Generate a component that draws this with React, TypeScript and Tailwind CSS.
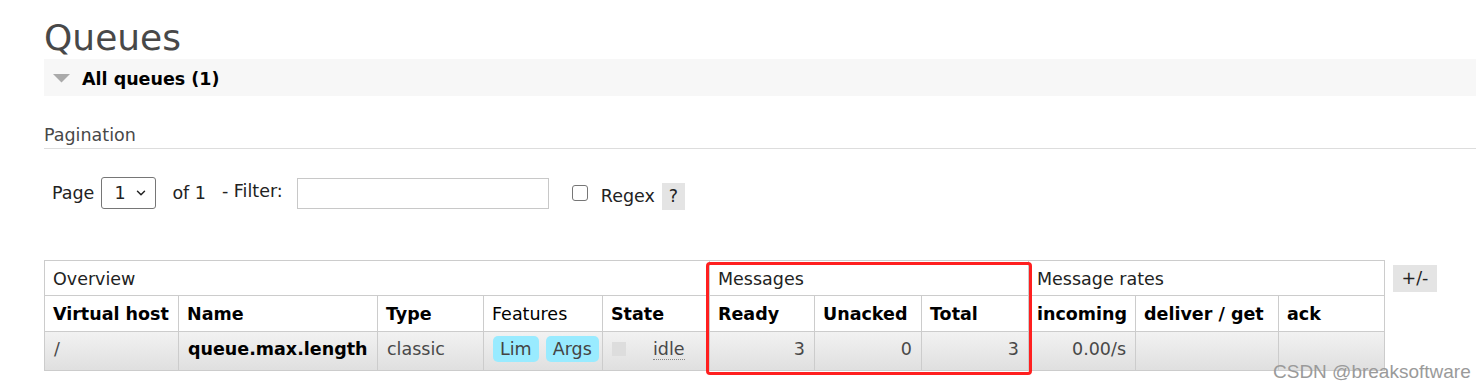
import { ChevronDown } from 'lucide-react'

const groupCols = [
  { label: 'Overview', span: 5 },
  { label: 'Messages', span: 3 },
  { label: 'Message rates', span: 3 },
]

const headers = [
  { label: 'Virtual host', w: 'w-[134px]' },
  { label: 'Name', w: 'w-[199px]' },
  { label: 'Type', w: 'w-[106px]' },
  { label: 'Features', w: 'w-[119px]', normal: true },
  { label: 'State', w: 'w-[107px]' },
  { label: 'Ready', w: 'w-[105px]' },
  { label: 'Unacked', w: 'w-[107px]' },
  { label: 'Total', w: 'w-[107px]' },
  { label: 'incoming', w: 'w-[107px]' },
  { label: 'deliver / get', w: 'w-[143px]' },
  { label: 'ack', w: 'w-[106px]' },
]

function Badge({ children }: { children: string }) {
  return (
    <span className="inline-block rounded-[5px] bg-[#99ebff] px-[7px] leading-[26px] text-[#444]">{children}</span>
  )
}

export default function App() {
  const cell = 'border border-[#cccccc] px-[9px] whitespace-nowrap overflow-hidden'
  const dcell = `${cell} pb-[4px]`

  return (
    <div className="min-h-[385px] w-[1476px] overflow-hidden bg-white pl-[44px] font-['DejaVu_Sans',Verdana,sans-serif] text-[17.5px] text-[#222]">
      {/* Title */}
      <h1 className="mt-[17px] text-[36px] leading-[42px] text-[#484848]">Queues</h1>

      {/* Section header */}
      <div className="flex h-[37px] items-center bg-[#f7f7f7]">
        <svg width="17" height="9" viewBox="0 0 17 9" className="ml-[9px] mt-[1px]">
          <polygon points="0,0 17,0 8.5,8.5" fill="#aaaaaa" />
        </svg>
        <span className="ml-[12px] mt-[3px] text-[17.5px] font-bold text-black">All queues (1)</span>
      </div>

      {/* Pagination */}
      <div className="mt-[29px] border-b border-[#dddddd] pb-[3px] leading-[20px] text-[#484848]">Pagination</div>

      <div className="mt-[28px] flex h-[32px] items-center pl-[8px] text-[17.5px] text-[#222]">
        <span>Page</span>
        <div className="ml-[7px] flex h-[32px] w-[55px] items-center justify-between rounded-[3px] border border-[#767676] pl-[12px] pr-[7px]">
          <span>1</span>
          <ChevronDown className="h-[14px] w-[14px] text-[#222]" strokeWidth={2.5} />
        </div>
        <span className="ml-[16px]">of 1</span>
        <span className="-mt-[4px] ml-[16px]">- Filter:</span>
        <div className="ml-[14px] h-[31px] w-[252px] border border-[#c8c8c8]" />
        <div className="ml-[23px] h-[16px] w-[16px] rounded-[3px] border border-[#767676]" />
        <span className="ml-[13px] mt-[6px]">Regex</span>
        <span className="ml-[7px] mt-[6px] flex h-[27px] w-[23px] items-center justify-center bg-[#e4e4e4]">?</span>
      </div>

      {/* Table */}
      <div className="relative mt-[51px] flex items-start gap-[8px]">
        <table className="w-[1341px] table-fixed border-collapse text-[17.5px]">
          <colgroup>
            {headers.map((h) => (
              <col key={h.label} className={h.w} />
            ))}
          </colgroup>
          <thead>
            <tr className="h-[35px]">
              {groupCols.map((g) => (
                <th key={g.label} colSpan={g.span} className={`${cell} pl-[8px] pt-[2px] text-left font-normal`}>
                  {g.label}
                </th>
              ))}
            </tr>
            <tr className="h-[36px]">
              {headers.map((h) => (
                <th key={h.label} className={`${cell} pl-[8px] pt-[2px] text-left ${h.normal ? 'font-normal' : 'font-bold'} text-black`}>
                  {h.label}
                </th>
              ))}
            </tr>
          </thead>
          <tbody>
            <tr className="h-[39px] bg-gradient-to-b from-[#f2f2f2] to-[#dfdfdf] text-[#484848]">
              <td className={dcell}>/</td>
              <td className={`${dcell} font-bold text-black`}>queue.max.length</td>
              <td className={dcell}>classic</td>
              <td className={dcell}>
                <div className="flex gap-[7px]">
                  <Badge>Lim</Badge>
                  <Badge>Args</Badge>
                </div>
              </td>
              <td className={dcell}>
                <div className="flex items-center">
                  <span className="h-[14px] w-[14px] bg-[#dddddd]" />
                  <span className="ml-[27px] border-b border-dotted border-[#888] leading-[20px]">idle</span>
                </div>
              </td>
              <td className={`${dcell} text-right`}>3</td>
              <td className={`${dcell} text-right`}>0</td>
              <td className={`${dcell} text-right`}>3</td>
              <td className={`${dcell} text-right`}>0.00/s</td>
              <td className={dcell} />
              <td className={dcell} />
            </tr>
          </tbody>
        </table>
        <span className="mt-[5px] flex h-[27px] w-[44px] items-center justify-center bg-[#e4e4e4]">+/-</span>

        {/* annotation highlight */}
        <div className="pointer-events-none absolute left-[662px] top-[2px] h-[113px] w-[326px] rounded-[4px] border-[3px] border-[#ff1f1f]" />
      </div>

      <div className="absolute left-[1273px] top-[358px] font-['Liberation_Sans',Arial,sans-serif] text-[19px] text-[#9a9a9a]">
        CSDN @breaksoftware
      </div>
    </div>
  )
}
